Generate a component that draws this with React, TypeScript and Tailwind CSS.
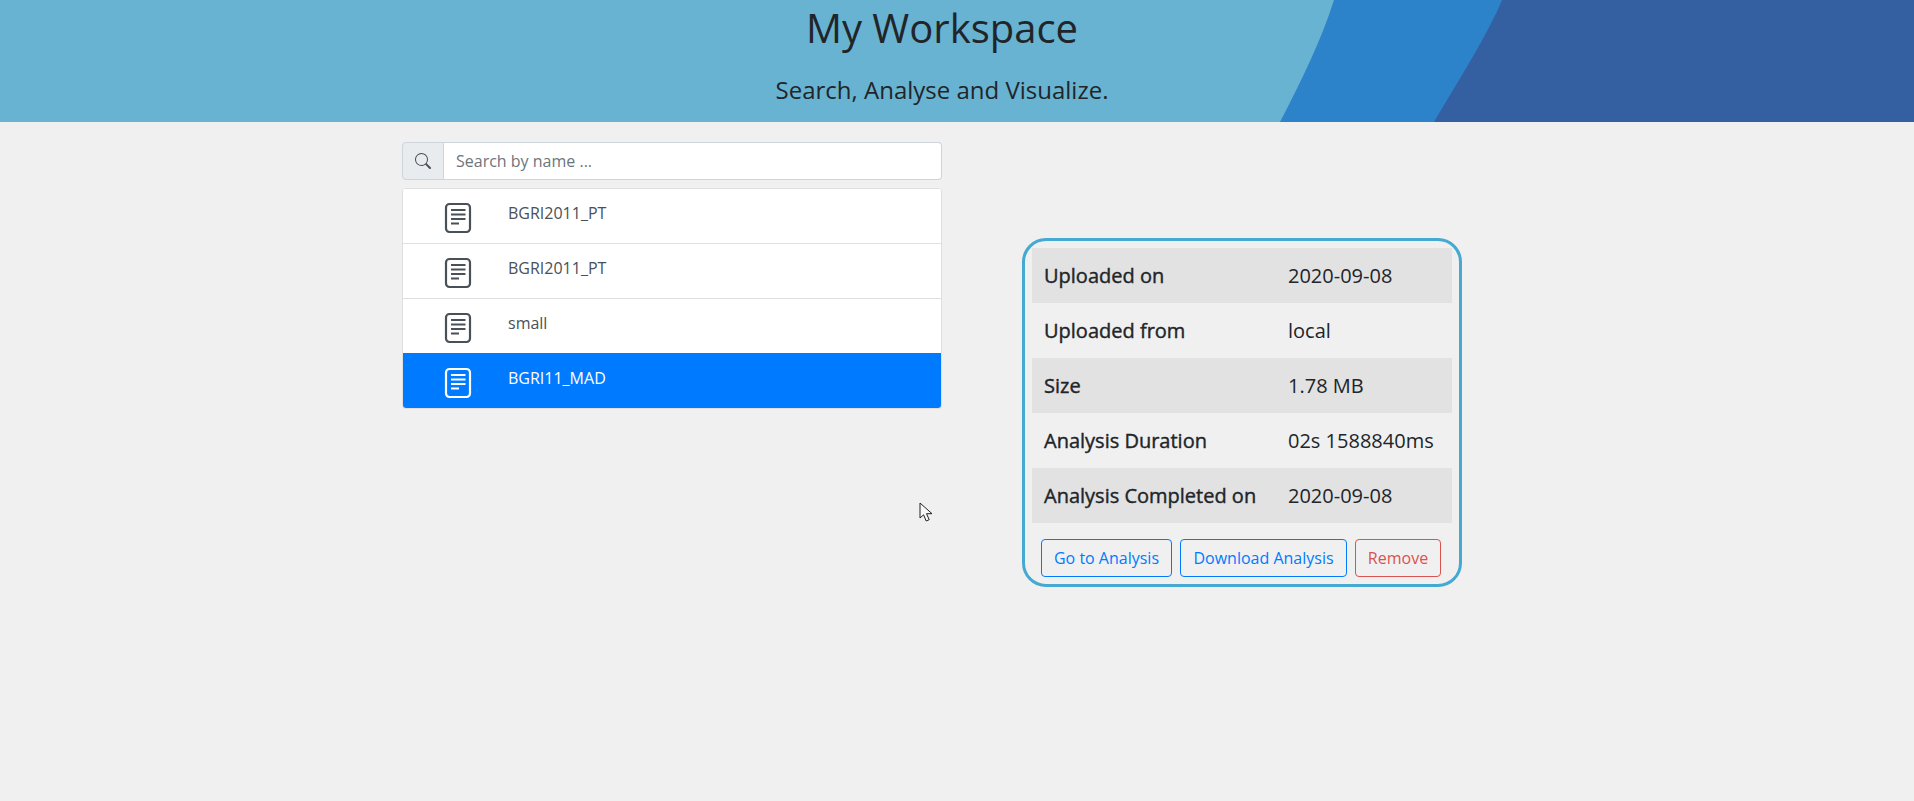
import { BsSearch } from "react-icons/bs";

const FILES = [
  { name: "BGRI2011_PT", active: false },
  { name: "BGRI2011_PT", active: false },
  { name: "small", active: false },
  { name: "BGRI11_MAD", active: true },
];

const DETAILS = [
  { label: "Uploaded on", value: "2020-09-08" },
  { label: "Uploaded from", value: "local" },
  { label: "Size", value: "1.78 MB" },
  { label: "Analysis Duration", value: "02s 1588840ms" },
  { label: "Analysis Completed on", value: "2020-09-08" },
];

function FileIcon({ color }: { color: string }) {
  return (
    <svg width="28" height="32" viewBox="0 0 28 32" fill="none" stroke={color}>
      <rect x="2" y="2" width="24" height="28" rx="3.5" strokeWidth="2.2" />
      <path d="M7 8h14.5M7 12.5h14.5M7 17h14.5M7 21.5h8" strokeWidth="1.8" />
    </svg>
  );
}

export default function App() {
  return (
    <div className="relative h-[801px] overflow-hidden bg-[#f0f0f0] font-['Open_Sans','Noto_Sans',sans-serif] text-[#212529]">
      {/* Header banner */}
      <header className="relative h-[122px] overflow-hidden bg-[#68b3d1]">
        <svg className="absolute inset-0" width="1914" height="122" viewBox="0 0 1914 122">
          <path d="M1334 0C1322 38 1302 80 1280 122H1914V0Z" fill="#2d83ca" />
          <path d="M1502 0C1490 30 1462 75 1434 122H1914V0Z" fill="#345fa0" />
        </svg>
        <div className="relative flex flex-col items-center w-[1884px]">
          <h1 className="text-[40px] leading-[48px] mt-[4px] text-[#212529]">My Workspace</h1>
          <p className="text-[24px] leading-[36px] mt-[20px] text-[#212529]">Search, Analyse and Visualize.</p>
        </div>
      </header>

      <div className="flex items-start pl-[402px]">
        {/* File list */}
        <div className="w-[540px] pt-5">
          <div className="flex h-[38px]">
            <div className="flex w-[42px] items-center justify-center rounded-l border border-[#ced4da] bg-[#e9ecef]">
              <BsSearch size={16} className="text-[#495057]" />
            </div>
            <input
              placeholder="Search by name ..."
              className="flex-1 rounded-r border border-l-0 border-[#ced4da] bg-white px-3 text-[16px] outline-none placeholder:text-[#6c757d]"
            />
          </div>
          <ul className="mt-2 overflow-hidden rounded border-x border-b border-[#dfdfdf] bg-white">
            {FILES.map((f, i) => (
              <li
                key={i}
                className={`flex h-[55px] items-center border-t ${
                  f.active ? "border-[#007bff] bg-[#007bff] text-white" : "border-[#dfdfdf] text-[#495057]"
                }`}
              >
                <div className="ml-[41px] mt-[4px] flex">
                  <FileIcon color={f.active ? "#ffffff" : "#495057"} />
                </div>
                <span className="ml-[36px] mb-[7px] text-[16px] leading-[24px]">{f.name}</span>
              </li>
            ))}
          </ul>
        </div>

        {/* Selected file details */}
        <div className="ml-[80px] mt-[116px] w-[440px] rounded-[24px] border-[3px] border-[#45a9d1] px-[7px] pt-[7px]">
          {DETAILS.map((d, i) => (
            <div
              key={d.label}
              className={`flex h-[55px] items-center text-[20px] ${i % 2 === 0 ? "bg-[#e2e2e2]" : ""}`}
            >
              <div className="w-[256px] pl-[12px] [-webkit-text-stroke:0.4px_#212529]">{d.label}</div>
              <div>{d.value}</div>
            </div>
          ))}
          <div className="mt-4 mb-[7px] flex gap-2 pl-[9px] text-[16px]">
            <button className="h-[38px] w-[131px] rounded border border-[#007bff] text-[#007bff]">Go to Analysis</button>
            <button className="h-[38px] w-[167px] rounded border border-[#007bff] text-[#007bff]">Download Analysis</button>
            <button className="h-[38px] w-[86px] rounded border border-[#d9534f] text-[#d9534f]">Remove</button>
          </div>
        </div>
      </div>

      {/* Mouse pointer caught in the screenshot */}
      <svg className="absolute left-[919px] top-[502px]" width="14" height="22" viewBox="0 0 14 22">
        <path d="M1 1v15l3.6-3.2 2.6 6.2 3-1.3-2.7-6H13Z" fill="#f8f8f8" stroke="#222" strokeWidth="1" />
      </svg>
    </div>
  );
}
